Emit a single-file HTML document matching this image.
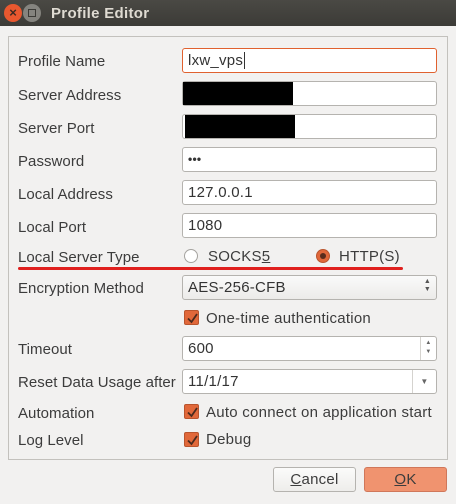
<!DOCTYPE html>
<html><head><meta charset="utf-8"><style>
*{margin:0;padding:0;box-sizing:border-box}
body{width:456px;height:504px;background:#f2f1f0;font-family:"Liberation Sans",sans-serif;font-size:15px;letter-spacing:.25px;color:#3c3c3c;position:relative;overflow:hidden}
.a{position:absolute}
.tb{left:0;top:0;width:456px;height:26px;background:linear-gradient(#4a4944,#3c3b37)}
.grp{left:8px;top:36px;width:440px;height:424px;border:1px solid #c3c1bd}
.lbl{left:18px;line-height:16px;padding-top:2px;letter-spacing:.05px}
.in{left:182px;width:255px;height:25px;background:#fff;border:1px solid #b5b3af;border-radius:3px;padding-left:5px;line-height:23px;color:#333}
.blk{background:#000}
.cb{width:15px;height:15px;background:#e1683a;border:1px solid #b9542d;border-radius:2px}
.cb svg{position:absolute;left:1px;top:1px}
.t{line-height:16px;padding-top:1px}
.btn{height:25px;border:1px solid #b5b3af;border-radius:3px;text-align:center;line-height:23px}
</style></head><body>
<div class="a tb"></div>
<div class="a" style="left:4px;top:4px;width:18px;height:18px;border-radius:50%;background:#e9582f;color:#3c2a22;font-size:13px;line-height:18px;text-align:center;font-weight:bold;letter-spacing:0">×</div>
<div class="a" style="left:23px;top:4px;width:18px;height:18px;border-radius:50%;background:#85847f"><div class="a" style="left:5px;top:5px;width:8px;height:8px;border:1px solid #3c3b37"></div></div>
<div class="a" style="left:51px;top:4px;color:#dfdbd2;font-weight:bold;font-size:15px;line-height:19px;letter-spacing:.3px">Profile Editor</div>
<div class="a grp"></div>

<div class="a lbl" style="top:52px">Profile Name</div>
<div class="a in" style="top:48px;border-color:#e0612f">lxw_vps<span style="border-left:1px solid #333;margin-left:1px"></span></div>
<div class="a lbl" style="top:86px">Server Address</div>
<div class="a in" style="top:81px"></div><div class="a blk" style="left:183px;top:82px;width:110px;height:23px"></div>
<div class="a lbl" style="top:119px">Server Port</div>
<div class="a in" style="top:114px"></div><div class="a blk" style="left:185px;top:115px;width:110px;height:23px"></div>
<div class="a lbl" style="top:152px">Password</div>
<div class="a in" style="top:147px;font-size:12px;font-weight:bold">•••</div>
<div class="a lbl" style="top:185px">Local Address</div>
<div class="a in" style="top:180px">127.0.0.1</div>
<div class="a lbl" style="top:218px">Local Port</div>
<div class="a in" style="top:213px">1080</div>

<div class="a lbl" style="top:248px">Local Server Type</div>
<div class="a" style="left:184px;top:249px;width:14px;height:14px;border-radius:50%;background:#fff;border:1px solid #a5a39f"></div>
<div class="a t" style="left:208px;top:248px">SOCKS<span style="text-decoration:underline">5</span></div>
<div class="a" style="left:316px;top:249px;width:14px;height:14px;border-radius:50%;background:#e1683a;border:1px solid #b9542d"><div class="a" style="left:3px;top:3px;width:6px;height:6px;border-radius:50%;background:#5a2c1c"></div></div>
<div class="a t" style="left:339px;top:248px">HTTP(S)</div>
<div class="a" style="left:18px;top:267px;width:385px;height:3px;background:#e0201e;border-radius:2px"></div>

<div class="a lbl" style="top:279px">Encryption Method</div>
<div class="a in" style="top:275px;background:linear-gradient(#fafafa,#ecebe9)">AES-256-CFB<span class="a" style="right:5px;top:2px;font-size:7px;line-height:8px;color:#555">▲<br>▼</span></div>
<div class="a cb" style="left:184px;top:310px"><svg width="13" height="13"><path d="M2 6.5L5.5 10L11 2" stroke="#4a2a1e" stroke-width="1.8" fill="none"/></svg></div>
<div class="a t" style="left:206px;top:310px">One-time authentication</div>

<div class="a lbl" style="top:340px">Timeout</div>
<div class="a in" style="top:336px">600<span class="a" style="right:0;top:0;width:16px;height:23px;border-left:1px solid #d5d3cf;font-size:6px;line-height:9px;text-align:center;color:#666;padding-top:2px">▲<br>▼</span></div>
<div class="a lbl" style="top:373px">Reset Data Usage after</div>
<div class="a in" style="top:369px;left:182px">11/1/17<span class="a" style="right:0;top:0;width:24px;height:23px;border-left:1px solid #d5d3cf;font-size:8px;text-align:center;color:#666">▼</span></div>

<div class="a lbl" style="top:404px">Automation</div>
<div class="a cb" style="left:184px;top:404px"><svg width="13" height="13"><path d="M2 6.5L5.5 10L11 2" stroke="#4a2a1e" stroke-width="1.8" fill="none"/></svg></div>
<div class="a t" style="left:206px;top:404px">Auto connect on application start</div>
<div class="a lbl" style="top:431px">Log Level</div>
<div class="a cb" style="left:184px;top:432px"><svg width="13" height="13"><path d="M2 6.5L5.5 10L11 2" stroke="#4a2a1e" stroke-width="1.8" fill="none"/></svg></div>
<div class="a t" style="left:206px;top:431px">Debug</div>

<div class="a btn" style="left:273px;top:467px;width:83px;background:linear-gradient(#fbfbfa,#eeedeb)"><u>C</u>ancel</div>
<div class="a btn" style="left:364px;top:467px;width:83px;background:#f0936f;border-color:#d0775a"><u>O</u>K</div>
</body></html>
